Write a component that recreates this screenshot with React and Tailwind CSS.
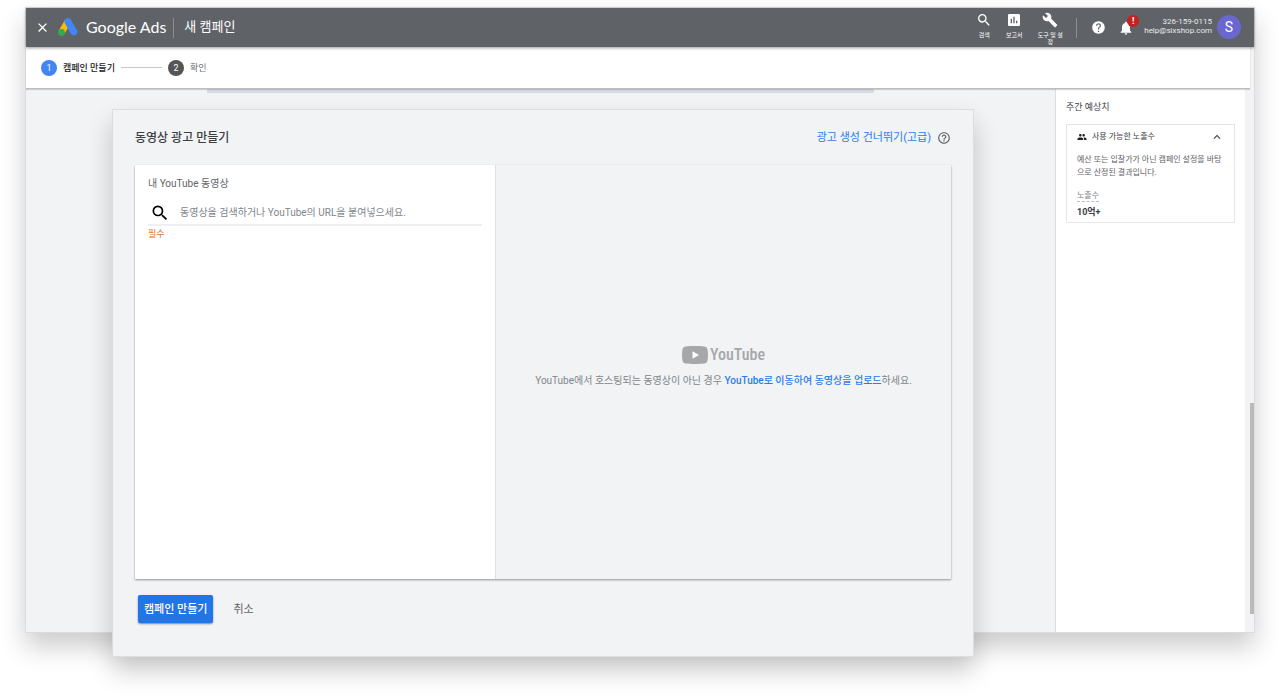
import {
  MdAssessment,
  MdBuild,
  MdClose,
  MdExpandLess,
  MdHelp,
  MdHelpOutline,
  MdNotifications,
  MdPeople,
  MdSearch,
} from "react-icons/md";

function AdsLogo() {
  return (
    <svg viewBox="0 0 40 36" className="h-[18px] w-5" aria-hidden="true">
      <path d="M13.5 4.6 25 10.8 12.7 32.2 1.2 25.5z" fill="#fbbc04" />
      <path
        d="M38.4 25.4 26.4 4.6A7 7 0 0 0 13.6 4.2c-1.1 2.2-.9 4.9.3 7L26 32.2a7.2 7.2 0 0 0 12.4-6.8z"
        fill="#4285f4"
      />
      <circle cx="7" cy="28.8" r="6.8" fill="#34a853" />
    </svg>
  );
}

function ToolButton({ icon: Icon, label }) {
  return (
    <button type="button" className="flex w-[30px] flex-col items-center gap-[3px]">
      <Icon className="size-4" />
      <span className="text-[6px] leading-[7px]">{label}</span>
    </button>
  );
}

function Header() {
  return (
    <header className="relative z-10 flex h-[39px] items-center bg-[#5f6368] text-white shadow-[0_1px_3px_rgba(0,0,0,0.4)]">
      <button type="button" aria-label="닫기" className="ml-[9px]">
        <MdClose className="size-[15px]" />
      </button>
      <div className="ml-2 flex items-center gap-2 pb-[2px]">
        <AdsLogo />
        <span className="font-['Lato','Noto_Sans_CJK_KR',sans-serif] text-[16px] leading-5">
          Google Ads
        </span>
      </div>
      <div className="ml-[7px] h-5 w-px bg-[#8b8e92]" />
      <h1 className="ml-[10px] pb-[2px] text-[13px] leading-5">새 캠페인</h1>

      <div className="ml-auto flex items-center pr-[13px]">
        <div className="flex h-8 items-start">
          <ToolButton icon={MdSearch} label="검색" />
          <ToolButton icon={MdAssessment} label="보고서" />
          <div className="ml-[6px]">
            <ToolButton icon={MdBuild} label="도구 및 설정" />
          </div>
        </div>
        <div className="ml-[11px] h-5 w-px bg-[#8b8e92]" />
        <button type="button" aria-label="도움말" className="ml-[14px]">
          <MdHelp className="size-[15px]" />
        </button>
        <button type="button" aria-label="알림" className="relative ml-3">
          <MdNotifications className="size-4" />
          <span className="absolute -top-[5px] left-[9px] flex size-3 items-center justify-center rounded-full bg-[#c5221f] text-[9px] leading-3 font-bold">
            !
          </span>
        </button>
        <div className="ml-[10px] pb-1 text-right text-[8px] leading-[9px] text-[#e8eaed]">
          <div>326-159-0115</div>
          <div>help@sixshop.com</div>
        </div>
        <button
          type="button"
          aria-label="계정"
          className="mb-[2px] ml-[5px] flex size-6 items-center justify-center rounded-full bg-[#6a67ce] text-[14px] leading-4"
        >
          S
        </button>
      </div>
    </header>
  );
}

function Stepper() {
  return (
    <ol className="relative mr-1 flex h-[42px] items-center border-b border-[#bdbdbf] bg-white pl-[15px] text-[9px] leading-4 shadow-[0_1px_1px_rgba(0,0,0,0.15)]">
      <li className="flex items-center gap-[6px] font-medium text-[#202124]">
        <span className="flex size-4 items-center justify-center rounded-full bg-[#4285f4] text-[9px] font-normal text-white">
          1
        </span>
        캠페인 만들기
      </li>
      <li className="flex items-center text-[#757575]">
        <span className="mx-[6px] h-px w-[41px] bg-[#c8c8c8]" />
        <span className="mr-[6px] flex size-4 items-center justify-center rounded-full bg-[#555] text-[9px] text-white">
          2
        </span>
        확인
      </li>
    </ol>
  );
}

function VideoPicker() {
  return (
    <div className="flex min-h-[414px] bg-[#f1f3f4] shadow-[0_1px_2px_rgba(0,0,0,0.4)]">
      <div className="w-[361px] border-r border-[#e0e0e0] bg-white px-[13px] pt-[11px]">
        <label htmlFor="video-search" className="block text-[10px] leading-4 text-[#5f6368]">
          내 YouTube 동영상
        </label>
        <div className="mt-1 flex h-[30px] items-center border-b-2 border-[#eeeff0] pt-[5px]">
          <MdSearch className="ml-[2px] size-5 text-black" />
          <input
            id="video-search"
            type="text"
            placeholder="동영상을 검색하거나 YouTube의 URL을 붙여넣으세요."
            className="ml-[10px] min-w-0 flex-1 bg-transparent text-[10px] leading-4 outline-none placeholder:text-[#80868b]"
          />
        </div>
        <p className="text-[9px] leading-4 text-[#e37426]">필수</p>
      </div>
      <div className="flex flex-1 flex-col items-center justify-center gap-2 pb-[10px]">
        <div className="flex items-center gap-[2px] text-[#a6a7a8]">
          <svg viewBox="0 0 26 18" className="h-[18px] w-[26px]" aria-hidden="true">
            <path
              d="M4 .5C9 -.1 17 -.1 22 .5c2.5.2 3.3 1.5 3.6 3.5.5 3.3.5 6.7 0 10-.3 2-1.1 3.3-3.6 3.5-5 .6-13 .6-18 0C1.5 17.3.7 16 .4 14-.1 10.7-.1 7.3.4 4 .7 2 1.500.7 4 .5z"
              fill="currentColor"
            />
            <path d="M10.5 5.3v7.4L17 9z" fill="#fff" />
          </svg>
          <span className="font-['Roboto_Condensed','Liberation_Sans_Narrow',sans-serif] text-[16px] leading-5 font-medium">
            YouTube
          </span>
        </div>
        <p className="text-[10px] leading-4 text-[#80868b]">
          YouTube에서 호스팅되는 동영상이 아닌 경우{" "}
          <a href="#upload" className="font-medium text-[#2b7de9]">
            YouTube로 이동하여 동영상을 업로드
          </a>
          하세요.
        </p>
      </div>
    </div>
  );
}

function CreateAdCard() {
  return (
    <section className="relative z-10 mt-4 mr-[81px] -mb-[25px] ml-[86px] border border-[#dcdee0] bg-[#f1f3f4] px-[22px] pb-[33px] shadow-[0_14px_24px_rgba(0,0,0,0.2)]">
      <div className="flex h-[55px] items-center justify-between">
        <h2 className="text-[12px] leading-5 font-medium text-[#3c4043]">동영상 광고 만들기</h2>
        <div className="flex items-center gap-[6px]">
          <a href="#skip" className="text-[11px] leading-5 text-[#2b7de9]">
            광고 생성 건너뛰기(고급)
          </a>
          <button type="button" aria-label="도움말">
            <MdHelpOutline className="size-[14px] text-[#5f6368]" />
          </button>
        </div>
      </div>
      <VideoPicker />
      <div className="mt-4 ml-[3px] flex items-center gap-5 text-[11px] leading-4">
        <button
          type="button"
          className="h-7 rounded-[2px] bg-[#2275e6] px-[6px] pt-px font-medium text-white shadow-[0_1px_2px_rgba(0,0,0,0.45)]"
        >
          캠페인 만들기
        </button>
        <button type="button" className="pt-px text-[#5f6368]">
          취소
        </button>
      </div>
    </section>
  );
}

function Forecast() {
  return (
    <aside className="w-[190px] shrink-0 border-l border-[#dadce0] bg-white px-[10px] pt-[10px]">
      <h2 className="text-[9px] leading-4 text-[#3c4043]">주간 예상치</h2>
      <section className="mt-[9px] border border-[#e4e5e7] px-[10px] pt-1 pb-1 text-[8px]">
        <div className="flex items-center">
          <MdPeople className="size-[10px] text-[#202124]" />
          <h3 className="ml-[5px] leading-4 text-[#3c4043]">사용 가능한 노출수</h3>
          <button type="button" aria-label="접기" className="ml-auto">
            <MdExpandLess className="size-[14px] text-[#3c4043]" />
          </button>
        </div>
        <p className="-mr-1 mt-2 leading-[13px] text-[#5f6368]">
          예산 또는 입찰가가 아닌 캠페인 설정을 바탕으로 산정된 결과입니다.
        </p>
        <dl className="mt-3">
          <dt className="w-fit border-b border-dashed border-[#bdbdbd] leading-[10px] text-[#80868b]">
            노출수
          </dt>
          <dd className="mt-1 text-[9px] leading-3 font-bold text-[#3c4043]">10억+</dd>
        </dl>
      </section>
    </aside>
  );
}

export default function App() {
  return (
    <div className="min-h-screen bg-white px-[25px] pt-[7px] font-['Roboto','Noto_Sans_CJK_KR',sans-serif]">
      <div className="relative border border-[#dadce0] bg-[#f1f3f4] shadow-[0_14px_24px_rgba(0,0,0,0.2)]">
        <Header />
        <Stepper />
        <div className="flex pr-[9px]">
          <main className="min-w-0 flex-1">
            <div className="mx-[181px] h-1 bg-[#d8d9e1]" />
            <CreateAdCard />
          </main>
          <Forecast />
        </div>
        <div className="absolute right-0 bottom-[18px] h-[211px] w-1 bg-[#b9bbbb]" />
      </div>
    </div>
  );
}
